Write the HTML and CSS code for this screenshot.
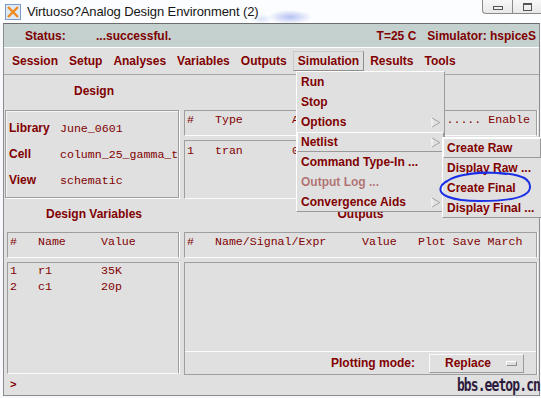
FILE: index.html
```html
<!DOCTYPE html>
<html lang="en">

<head>
    <meta charset="utf-8">
    <title>Virtuoso Analog Design Environment</title>
    <link rel="stylesheet" href="styles.css">
</head>

<body>
    <div class="screen">
        <div class="titlebar">
            <svg class="app-icon" width="16" height="16" viewBox="0 0 16 16">
                <rect x="0.5" y="0.5" width="15" height="15" fill="#dde9f6" stroke="#7d9cc6" />
                <path d="M3 3 L13 13 M13 3 L3 13" stroke="#f08a1c" stroke-width="2.4" />
            </svg>
            <span class="title">Virtuoso?Analog Design Environment (2)</span>
            <div class="winctl">
                <span class="wbtn"><span class="ico-min"></span></span>
                <span class="wbtn"><span class="ico-max"></span></span>
            </div>
        </div>

        <div class="window">
            <div class="statusbar">
                <span class="status-label">Status:</span>
                <span class="status-text">...successful.</span>
                <span class="temp">T=25 C</span>
                <span class="sim">Simulator: hspiceS</span>
            </div>

            <div class="menubar">
                <span class="menu-item">Session</span>
                <span class="menu-item">Setup</span>
                <span class="menu-item">Analyses</span>
                <span class="menu-item">Variables</span>
                <span class="menu-item">Outputs</span>
                <span class="menu-item open">Simulation</span>
                <span class="menu-item">Results</span>
                <span class="menu-item">Tools</span>
            </div>

            <div class="main">
                <div class="heading">Design</div>
                <div></div>

                <div class="box design-box">
                    <div class="field"><span class="label">Library</span><span class="val">June_0601</span></div>
                    <div class="field"><span class="label">Cell</span><span class="val">column_25_gamma_t</span></div>
                    <div class="field"><span class="label">View</span><span class="val">schematic</span></div>
                </div>

                <div class="stack">
                    <div class="box list-head mono">
                        <span class="c-num">#</span>
                        <span class="c-type">Type</span>
                        <span class="c-args">A</span>
                        <span class="c-enable">..... Enable</span>
                    </div>
                    <div class="box list-body an-body mono">
                        <div class="row"><span class="c-num">1</span><span class="c-type">tran</span><span class="c-args">0</span></div>
                    </div>
                </div>

                <div class="heading low">Design Variables</div>
                <div class="heading low">Outputs</div>

                <div class="stack vars">
                    <div class="box list-head mono">
                        <span class="c-num">#</span>
                        <span class="c-name">Name</span>
                        <span>Value</span>
                    </div>
                    <div class="box list-body vars-body mono">
                        <div class="row"><span class="c-num">1</span><span class="c-name">r1</span><span>35K</span></div>
                        <div class="row"><span class="c-num">2</span><span class="c-name">c1</span><span>20p</span></div>
                    </div>
                </div>

                <div class="stack">
                    <div class="box list-head mono">
                        <span class="c-num">#</span>
                        <span class="c-signal">Name/Signal/Expr</span>
                        <span class="c-value">Value</span>
                        <span>Plot Save March</span>
                    </div>
                    <div class="box out-body">
                        <div class="out-list"></div>
                        <div class="plot-row">
                            <span class="plot-label">Plotting mode:</span>
                            <span class="cyclic">Replace<span class="cyclic-mark"></span></span>
                        </div>
                    </div>
                </div>
            </div>

            <div class="cmdline">
                <span class="prompt">&gt;</span>
                <span class="watermark">bbs.eetop.cn</span>
            </div>
        </div>

        <div class="popup sim-menu">
            <div class="pitem">Run</div>
            <div class="pitem">Stop</div>
            <div class="pitem">Options
                <svg class="cascade" width="10" height="11" viewBox="0 0 10 11"><path d="M1 1 L1 10" stroke="#fff" /><path d="M1 1 L9 5.5 L1 10" fill="none" stroke="#a6a6a6" /></svg>
            </div>
            <div class="pitem raised">Netlist
                <svg class="cascade" width="10" height="11" viewBox="0 0 10 11"><path d="M1 1 L1 10" stroke="#fff" /><path d="M1 1 L9 5.5 L1 10" fill="none" stroke="#a6a6a6" /></svg>
            </div>
            <div class="pitem">Command Type-In ...</div>
            <div class="pitem"><span class="disabled">Output Log ...</span></div>
            <div class="pitem">Convergence Aids
                <svg class="cascade" width="10" height="11" viewBox="0 0 10 11"><path d="M1 1 L1 10" stroke="#fff" /><path d="M1 1 L9 5.5 L1 10" fill="none" stroke="#a6a6a6" /></svg>
            </div>
        </div>

        <div class="popup netlist-menu">
            <div class="pitem raised">Create Raw</div>
            <div class="pitem">Display Raw ...</div>
            <div class="pitem">Create Final</div>
            <div class="pitem">Display Final ...</div>
        </div>

        <!-- hand drawn marker around "Create Final" -->
        <svg class="ink" width="541" height="398" viewBox="0 0 541 398">
            <path d="M506 174 C482 170 452 174 442 185 C435 195 452 201 480 201 C506 201 530 198 530 187 C531 176 512 172 480 173 C464 174 452 177 446 182"
                fill="none" stroke="#1a2fe6" stroke-width="2" stroke-linecap="round" />
        </svg>
    </div>
</body>

</html>
```

FILE: styles.css
```css
* {
    box-sizing: border-box;
}

html,
body {
    margin: 0;
}

body {
    width: 541px;
    height: 398px;
    overflow: hidden;
    font-family: "Liberation Sans", Arial, sans-serif;
}

.screen {
    position: relative;
    width: 541px;
    height: 398px;
    overflow: hidden;
    background: #f6f8fb;
}

.titlebar {
    height: 23px;
    display: flex;
    align-items: center;
    gap: 6px;
    padding-left: 5px;
    background:
        radial-gradient(ellipse 22px 7px at 290px 17px, rgba(90, 120, 225, 0.45), transparent),
        radial-gradient(ellipse 10px 5px at 262px 19px, rgba(120, 150, 230, 0.25), transparent),
        #fcfdfe;
}

.app-icon {
    flex: none;
}

.title {
    font-size: 13px;
    color: #161616;
    letter-spacing: -0.1px;
}

.winctl {
    margin-left: auto;
    align-self: flex-start;
    display: flex;
    height: 14px;
    border: 1px solid #8a8a8a;
    border-top: none;
    border-right: none;
    border-radius: 0 0 0 4px;
    background: linear-gradient(#f8f8f8, #e8e8e8);
}

.wbtn {
    width: 29px;
    display: flex;
    align-items: center;
    justify-content: center;
}

.wbtn+.wbtn {
    border-left: 1px solid #8a8a8a;
}

.ico-min {
    width: 10px;
    height: 4px;
    border: 1px solid #555;
    margin-top: 2px;
}

.ico-max {
    width: 9px;
    height: 8px;
    border: 1px solid #555;
    border-top-width: 2px;
}

.window {
    margin-left: 3px;
    width: 537px;
    border: 1px solid #8c8c8c;
    border-top-color: #6c6c6c;
    background: #e0e0e0;
    color: #800000;
}

.statusbar {
    height: 23px;
    display: flex;
    align-items: center;
    padding-right: 3px;
    background: #c4d1cf;
    font-size: 12px;
    font-weight: bold;
    white-space: nowrap;
    overflow: hidden;
}

.status-label {
    margin-left: 21px;
    width: 71px;
}

.temp {
    margin-left: auto;
}

.sim {
    margin-left: 11px;
}

.menubar {
    height: 28px;
    display: flex;
    align-items: center;
    gap: 1px;
    padding-left: 3px;
    border-top: 1px solid #fff;
    border-bottom: 1px solid #a6a6a6;
    font-size: 12px;
    font-weight: bold;
}

.menu-item {
    padding: 2px 4px;
    line-height: 14px;
    border: 1px solid transparent;
}

.menu-item.open {
    border-color: #c9c9c9 #8f8f8f #8f8f8f #c9c9c9;
}

.main {
    display: grid;
    grid-template-columns: 180px 353px;
    grid-template-rows: 35px 90px 32px 143px;
}

.heading {
    font-size: 12px;
    font-weight: bold;
    line-height: 14px;
    text-align: center;
    padding-top: 9px;
}

.heading.low {
    padding-top: 7px;
}

.box {
    border: 1px solid #9e9e9e;
    border-bottom-color: #fbfbfb;
    box-shadow: 1px 0 0 #fbfbfb;
}

.mono {
    font-family: "Liberation Mono", "Courier New", monospace;
    font-size: 11.6px;
}

.design-box {
    margin-left: 1px;
    width: 174px;
    height: 88px;
    padding-top: 4px;
    border-bottom-color: #9e9e9e;
    box-shadow: inset 1px 1px 0 #f4f4f4, 1px 1px 0 #fbfbfb;
    overflow: hidden;
}

.field {
    height: 26px;
    display: flex;
    align-items: center;
    white-space: nowrap;
}

.label {
    width: 54px;
    padding-left: 3px;
    font-size: 12px;
    font-weight: bold;
    flex: none;
}

.val {
    font-family: "Liberation Mono", "Courier New", monospace;
    font-size: 11.6px;
}

.stack {
    display: flex;
    flex-direction: column;
    gap: 4px;
}

.vars {
    margin-left: 3px;
    width: 172px;
}

.list-head {
    height: 26px;
    padding: 2px 2px 0;
    line-height: 14px;
    display: flex;
    white-space: nowrap;
    overflow: hidden;
}

.list-body {
    padding: 0 2px;
    white-space: nowrap;
    overflow: hidden;
}

.an-body {
    height: 59px;
    padding-top: 3px;
    line-height: 14px;
}

.vars-body {
    height: 112px;
    line-height: 16px;
}

.row {
    display: flex;
}

.c-num {
    width: 28px;
    flex: none;
}

.c-type {
    width: 77px;
    flex: none;
}

.c-args {
    flex: 1;
}

.c-enable {
    padding-right: 4px;
}

.c-name {
    width: 63px;
    flex: none;
}

.c-signal {
    width: 147px;
    flex: none;
}

.c-value {
    width: 56px;
    flex: none;
}

.out-body {
    height: 113px;
    display: flex;
    flex-direction: column;
    border-bottom-color: #9e9e9e;
}

.out-list {
    flex: 1;
}

.plot-row {
    height: 23px;
    display: flex;
    align-items: center;
    justify-content: flex-end;
    border-top: 1px solid #fbfbfb;
    padding-right: 12px;
    font-size: 12px;
    font-weight: bold;
}

.plot-label {
    margin-right: 14px;
}

.cyclic {
    width: 95px;
    height: 19px;
    display: flex;
    align-items: center;
    padding-left: 15px;
    border: 1px solid;
    border-color: #fbfbfb #9a9a9a #9a9a9a #fbfbfb;
}

.cyclic-mark {
    margin-left: auto;
    margin-right: 6px;
    width: 11px;
    height: 5px;
    border: 1px solid;
    border-color: #fff #8e8e8e #8e8e8e #fff;
}

.cmdline {
    height: 20px;
    display: flex;
    align-items: center;
    padding-left: 6px;
}

.prompt {
    font-family: "Liberation Mono", monospace;
    font-size: 11px;
    font-weight: bold;
}

.watermark {
    margin-left: auto;
    margin-right: -1px;
    font-family: "DejaVu Sans Mono", monospace;
    font-size: 13px;
    font-weight: bold;
    letter-spacing: -0.9px;
    color: #2d1b3d;
    transform: scaleY(1.3);
}

.popup {
    position: absolute;
    background: #e0e0e0;
    color: #800000;
    font-size: 12px;
    font-weight: bold;
    border: 1px solid;
    border-color: #fff #9a9a9a #9a9a9a #fff;
    white-space: nowrap;
    overflow: hidden;
}

.sim-menu {
    left: 296px;
    top: 71px;
    width: 149px;
    height: 141px;
}

.netlist-menu {
    left: 442px;
    top: 137px;
    width: 100px;
    height: 81px;
}

.pitem {
    height: 20px;
    display: flex;
    align-items: center;
    padding: 0 2px 0 3px;
    border: 1px solid transparent;
}

.pitem.raised {
    border-color: #fff #9a9a9a #9a9a9a #fff;
}

.cascade {
    margin-left: auto;
}

.disabled {
    color: rgba(128, 0, 0, 0.5);
}

.ink {
    position: absolute;
    left: 0;
    top: 0;
    pointer-events: none;
}
```
